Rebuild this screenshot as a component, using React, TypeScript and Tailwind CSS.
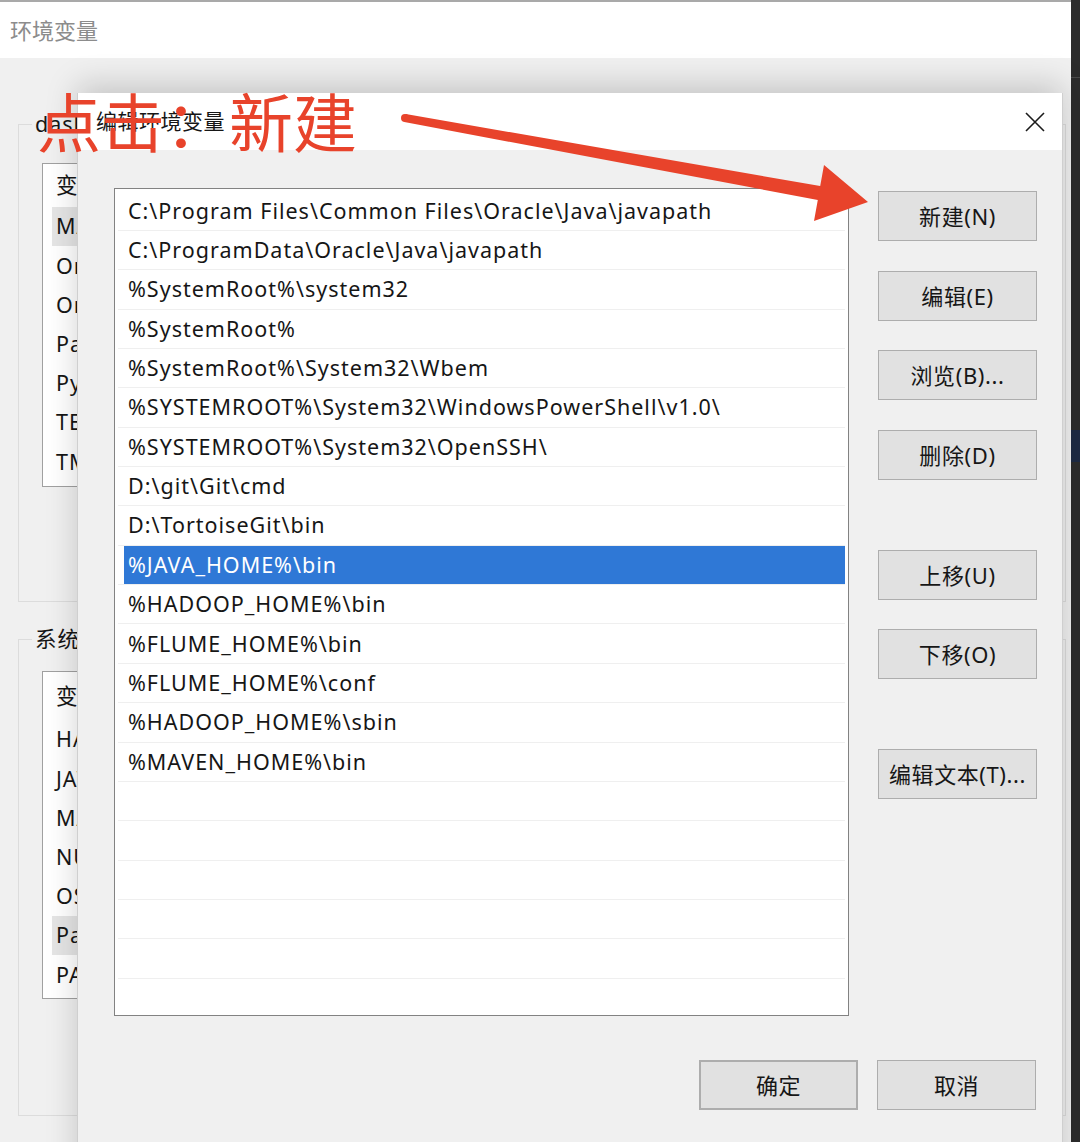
import React from "react";

const paths = [
  "C:\\Program Files\\Common Files\\Oracle\\Java\\javapath",
  "C:\\ProgramData\\Oracle\\Java\\javapath",
  "%SystemRoot%\\system32",
  "%SystemRoot%",
  "%SystemRoot%\\System32\\Wbem",
  "%SYSTEMROOT%\\System32\\WindowsPowerShell\\v1.0\\",
  "%SYSTEMROOT%\\System32\\OpenSSH\\",
  "D:\\git\\Git\\cmd",
  "D:\\TortoiseGit\\bin",
  "%JAVA_HOME%\\bin",
  "%HADOOP_HOME%\\bin",
  "%FLUME_HOME%\\bin",
  "%FLUME_HOME%\\conf",
  "%HADOOP_HOME%\\sbin",
  "%MAVEN_HOME%\\bin",
  "",
  "",
  "",
  "",
  "",
  "",
];

const userVars = ["MAVEN_HOME", "OneDrive", "OneDriveConsumer", "Path", "PyCharm", "TEMP", "TMP"];
const sysVars = ["HADOOP_HOME", "JAVA_HOME", "MAVEN_HOME", "NUMBER_OF_PROCESSORS", "OS", "Path", "PATHEXT"];

const Btn = ({label, className = ""}: {label: string; className?: string}) => (
  <button className={"w-[159px] h-[50px] bg-[#e1e1e1] border border-[#adadad] text-[22px] tracking-[0.6px] text-[#161616] " + className}>
    {label}
  </button>
);

const VarList = ({items, selected, headerH, height}: {items: string[]; selected: number; headerH: string; height: string}) => (
  <div className={"w-[700px] bg-white border border-[#a0a0a0] pl-[9px] overflow-hidden text-[21.5px] tracking-[1px] text-[#161616] " + height}>
    <div className={"flex items-center pl-[4px] " + headerH}>变量</div>
    {items.map((v, i) => (
      <div key={v} className={"h-[39.2px] flex items-center pl-[4px] " + (i === selected ? "bg-[#e5e5e5]" : "")}>
        {v}
      </div>
    ))}
  </div>
);

export default function App() {
  return (
    <div className="relative w-[1080px] h-[1142px] overflow-hidden flex font-['Noto_Sans','Noto_Sans_CJK_SC',sans-serif]">
      {/* outer window */}
      <div className="w-[1071px] h-full flex flex-col border-t-2 border-[#a9a9a9]">
        <div className="h-[56px] bg-white flex items-center pl-[10px] text-[22px] text-[#8c8c8c]">环境变量</div>
        <div className="flex-1 bg-[#f0f0f0] pl-[18px] pt-[54px]">
          <fieldset className="w-[1048px] border border-[#dcdcdc] pl-[23px] pt-[27px] pb-[114px]">
            <legend className="-ml-[10px] px-[3px] text-[21.5px] tracking-[1px] leading-[24px] text-[#161616]">dasl 的用户变量(U)</legend>
            <VarList items={userVars} selected={0} headerH="h-[43px]" height="h-[324px]" />
          </fieldset>
          <fieldset className="mt-[25px] w-[1048px] border border-[#dcdcdc] pl-[23px] pt-[20px] pb-[116px]">
            <legend className="-ml-[10px] px-[3px] text-[21.5px] tracking-[1px] leading-[24px] text-[#161616]">系统变量(S)</legend>
            <VarList items={sysVars} selected={5} headerH="h-[48px]" height="h-[328px]" />
          </fieldset>
        </div>
      </div>
      <div className="flex-1 h-full bg-[#2c2c2c] flex flex-col">
        <div className="h-[78px] border-b border-[#4a4a4a]" />
        <div className="h-[352px]" />
        <div className="h-[32px] bg-[#1d2a44]" />
      </div>

      {/* edit dialog */}
      <div className="absolute left-[77px] top-[93px] w-[986px] h-[1100px] flex flex-col bg-[#f0f0f0] border-x border-[#cfcfcf] shadow-[0_-8px_30px_rgba(0,0,0,0.18)]">
        <div className="h-[57px] bg-white flex items-center justify-between pl-[18px] pr-[17px]">
          <span className="text-[21px] tracking-[0.5px] text-[#161616]">编辑环境变量</span>
          <svg width="20" height="20" viewBox="0 0 20 20">
            <path d="M1 1L19 19M19 1L1 19" stroke="#1b1b1b" strokeWidth="1.6" />
          </svg>
        </div>
        <div className="flex pl-[36px] pt-[38px] gap-[29px]">
          <div className="w-[735px] h-[828px] bg-white border border-[#828282] px-[3px] pt-[2.5px] overflow-hidden">
            {paths.map((p, i) => (
              <div key={i} className="h-[39.36px] flex border-b border-[#efefef] text-[21.5px] tracking-[1px] text-[#161616]">
                {i === 9 ? (
                  <div className="flex-1 ml-[6px] pl-[4px] flex items-center bg-[#2f78d6] text-white">{p}</div>
                ) : (
                  <div className="flex-1 pl-[10px] flex items-center">{p}</div>
                )}
              </div>
            ))}
          </div>
          <div className="flex flex-col pt-[3px]">
            <Btn label="新建(N)" />
            <Btn label="编辑(E)" className="mt-[30px]" />
            <Btn label="浏览(B)..." className="mt-[29px]" />
            <Btn label="删除(D)" className="mt-[30px]" />
            <Btn label="上移(U)" className="mt-[70px]" />
            <Btn label="下移(O)" className="mt-[29px]" />
            <Btn label="编辑文本(T)..." className="mt-[70px]" />
          </div>
        </div>
        <div className="flex justify-end gap-[19px] pr-[26px] mt-[44px]">
          <Btn label="确定" className="border-2 border-[#3a7fd8]" />
          <Btn label="取消" />
        </div>
      </div>

      {/* annotation */}
      <div className="absolute left-[37px] top-[86px] text-[64px] leading-[66px] text-[#e8432b] font-['Noto_Sans_CJK_SC',sans-serif]">
        点击：新建
      </div>
      <svg className="absolute left-0 top-0 pointer-events-none" width="1080" height="300" viewBox="0 0 1080 300">
        <circle cx="405" cy="118" r="4" fill="#e8432b" />
        <polygon points="405.7,114 820.2,186.1 824,165 868,202 814,221 817.8,199.9 404.3,122" fill="#e8432b" />
      </svg>
    </div>
  );
}
